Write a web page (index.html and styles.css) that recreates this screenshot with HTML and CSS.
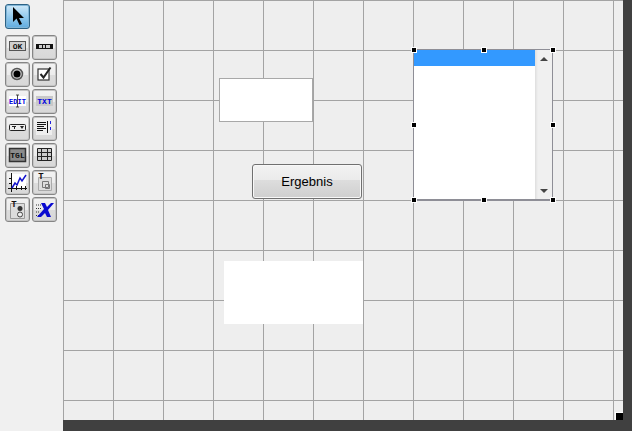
FILE: index.html
```html
<!DOCTYPE html>
<html lang="de">
<head>
  <meta charset="UTF-8" />
  <title>Layout Editor</title>
  <link rel="stylesheet" href="styles.css">
</head>
<body>

  <div class="palette">
    <button class="tool tool-active">
      <svg width="23" height="23" viewBox="0 0 23 23"><path d="M7 2v15l3.500-3.500 3 6.500 2.500-1-3-6h5z" fill="#000"/></svg>
    </button>

    <div class="tool-grid">
      <!-- Druckknopf -->
      <button class="tool">
        <svg width="23" height="23" viewBox="0 0 23 23"><rect x="3.500" y="5.500" width="16" height="9" fill="#d0d0d0" stroke="#555"/><text x="11.500" y="13" class="lbl">OK</text></svg>
      </button>
      <!-- Schieber -->
      <button class="tool">
        <svg width="23" height="23" viewBox="0 0 23 23"><rect x="3" y="8" width="17" height="5" fill="#ccc"/><path d="M3 8.500h17M3 12.500h17" stroke="#111"/><path d="M3 8h3v5H3zM9 8h1v5H9zM12 8h1v5h-1zM17 8h3v5h-3z" fill="#111"/></svg>
      </button>
      <!-- Radio -->
      <button class="tool">
        <svg width="23" height="23" viewBox="0 0 23 23"><circle cx="11" cy="11" r="5.500" fill="#ccc" stroke="#555" stroke-width="1.500"/><circle cx="11" cy="11" r="3.500" fill="#000"/></svg>
      </button>
      <!-- Checkbox -->
      <button class="tool">
        <svg width="23" height="23" viewBox="0 0 23 23"><rect x="5" y="6" width="11" height="11" fill="#fff" stroke="#333" stroke-width="1.200"/><path d="M7.500 11l3 3.500 7-10" fill="none" stroke="#222" stroke-width="2"/></svg>
      </button>
      <!-- Edit -->
      <button class="tool">
        <svg width="23" height="23" viewBox="0 0 23 23"><rect x="3" y="6" width="17" height="10" fill="#fff"/><text x="11.500" y="13.500" class="lbl lbl-blue lbl-small">EDIT</text><path d="M10 5h3M11.500 5v12M10 17h3" stroke="#222" fill="none" stroke-width=".8"/></svg>
      </button>
      <!-- Text -->
      <button class="tool">
        <svg width="23" height="23" viewBox="0 0 23 23"><rect x="3" y="6" width="17" height="10" fill="#c8c8c8"/><text x="11.500" y="13.500" class="lbl lbl-blue">TXT</text></svg>
      </button>
      <!-- Popup -->
      <button class="tool">
        <svg width="23" height="23" viewBox="0 0 23 23"><rect x="3.500" y="7.500" width="16" height="6" rx="1" fill="#eee" stroke="#222"/><path d="M6 9h4v1H9v2H8v-2H6zM14 9h4l-2 3z" fill="#222"/></svg>
      </button>
      <!-- Liste -->
      <button class="tool">
        <svg width="23" height="23" viewBox="0 0 23 23"><rect x="3" y="3" width="16" height="15" fill="#eee"/><path d="M4 5.500h9M4 7.500h9M4 9.500h7M4 11.500h9M4 13.500h6M14.500 4v12" stroke="#111"/><path d="M17.500 4v12" stroke="#22d" stroke-dasharray="3 3"/></svg>
      </button>
      <!-- Toggle -->
      <button class="tool">
        <svg width="23" height="23" viewBox="0 0 23 23"><rect x="3.500" y="4.500" width="16" height="13" fill="#8c8c8c" stroke="#333" stroke-width="1.500"/><text x="11.500" y="14" class="lbl">TGL</text></svg>
      </button>
      <!-- Tabelle -->
      <button class="tool">
        <svg width="23" height="23" viewBox="0 0 23 23"><path d="M4.500 4.500h14v12h-14zM4.500 8.500h14M4.500 12.500h14M8.500 4.500v12M14.500 4.500v12" fill="#ccc" stroke="#222"/></svg>
      </button>
      <!-- Achsen -->
      <button class="tool">
        <svg width="23" height="23" viewBox="0 0 23 23"><rect x="5" y="3" width="15" height="14" fill="#fff"/><path d="M5.500 2v19M2 17.500h19M3 7.500h3M3 12.500h3M10.500 15v4M15.500 15v4M19.500 15v4" stroke="#111" fill="none"/><path d="M6 17l3-5 2 2 3-7 2 3 4-6" stroke="#11c" stroke-width="1.500" fill="none"/></svg>
      </button>
      <!-- Panel -->
      <button class="tool">
        <svg width="23" height="23" viewBox="0 0 23 23"><path d="M5.500 6.500h13v13h-13z" fill="#ddd" stroke="#aaa"/><path d="M9.500 10.500h6v6h-6zM12.500 13.500h4v4h-4z" fill="none" stroke="#777"/><text x="8" y="8" class="lbl lbl-big">T</text></svg>
      </button>
      <!-- Gruppe -->
      <button class="tool">
        <svg width="23" height="23" viewBox="0 0 23 23"><path d="M4.500 5.500h14v15h-14z" fill="#ddd" stroke="#999"/><circle cx="14" cy="10.500" r="2.500" fill="#333"/><circle cx="14" cy="16.500" r="2.500" fill="#eee" stroke="#444"/><text x="8" y="9" class="lbl lbl-big">T</text></svg>
      </button>
      <!-- ActiveX -->
      <button class="tool">
        <svg width="23" height="23" viewBox="0 0 23 23"><path d="M3 7h5M3 10.500h5M3 14h4M3 17.500h5" stroke="#333" stroke-dasharray="1 1" fill="none"/><path d="M8 5h4l2 4 4-4h3l-6 7 3 7h-4l-2-4-4 4H4l7-8z" fill="#0a0ad0"/></svg>
      </button>
    </div>
  </div>

  <div class="workspace">
    <div class="canvas-row">
      <div class="canvas">
        <div class="widget edit-box"></div>
        <div class="widget push-btn">Ergebnis</div>
        <div class="widget static-box"></div>

        <div class="widget list-box">
          <div class="list-items"><div class="list-selected"></div></div>
          <div class="list-scroll">
            <span class="arrow-up"></span>
            <span class="arrow-down"></span>
          </div>
          <span class="handle h-tl"></span>
          <span class="handle h-tc"></span>
          <span class="handle h-tr"></span>
          <span class="handle h-ml"></span>
          <span class="handle h-mr"></span>
          <span class="handle h-bl"></span>
          <span class="handle h-bc"></span>
          <span class="handle h-br"></span>
        </div>

        <span class="resize-grip"></span>
      </div>
      <div class="edge-right"></div>
    </div>
    <div class="edge-bottom"></div>
  </div>

</body>
</html>
```

FILE: styles.css
```css
html, body {
  height: 100%;
}

body {
  margin: 0;
  display: flex;
  height: 431px;
  overflow: hidden;
  background: #f0f0f0;
  font-family: "Liberation Sans", Arial, sans-serif;
}

/* Werkzeugleiste */
.palette {
  width: 63px;
  flex: none;
  box-sizing: border-box;
  padding: 4px 0 0 5px;
  background: #f0f0f0;
}

.tool-grid {
  display: grid;
  grid-template-columns: 25px 25px;
  grid-auto-rows: 25px;
  gap: 2px;
  margin-top: 6px;
}

.tool {
  display: flex;
  align-items: center;
  justify-content: center;
  width: 25px;
  height: 25px;
  padding: 0;
  border: 1px solid #858585;
  border-radius: 3px;
  background: linear-gradient(to bottom, #f2f2f2 0, #ececec 50%, #dcdcdc 51%, #d8d8d8 100%);
  box-shadow: inset 0 0 0 1px #c4c4c4;
}

.tool-active {
  border-color: #2c6285;
  background: linear-gradient(to bottom, #cfe8f8 0, #8fc8ec 55%, #5fabdf 100%);
  box-shadow: inset 0 0 0 1px #7fb4d6;
}

.lbl {
  font-family: "Liberation Mono", monospace;
  font-size: 8px;
  font-weight: bold;
  text-anchor: middle;
  fill: #111;
}

.lbl-blue {
  fill: #0000e0;
}

.lbl-small {
  font-size: 7px;
}

.lbl-big {
  font-size: 9px;
}

/* Arbeitsflaeche */
.workspace {
  flex: 1;
  display: flex;
  flex-direction: column;
}

.canvas-row {
  display: flex;
  height: 420px;
}

.canvas {
  position: relative;
  width: 560px;
  height: 420px;
  background-color: #eeeeee;
  background-image:
    linear-gradient(to right, #a3a3a3 1px, transparent 1px),
    linear-gradient(to bottom, #a3a3a3 1px, transparent 1px);
  background-size: 50px 50px;
}

.edge-right {
  flex: 1;
  background: #404040;
}

.edge-bottom {
  flex: 1;
  background: #404040;
}

.widget {
  position: absolute;
  box-sizing: border-box;
}

.edit-box {
  left: 156px;
  top: 78px;
  width: 94px;
  height: 44px;
  background: #fff;
  border: 1px solid #a8a8a8;
}

.push-btn {
  left: 189px;
  top: 164px;
  width: 110px;
  height: 35px;
  border: 1px solid #707070;
  border-radius: 3px;
  background: linear-gradient(to bottom, #f2f2f2 0, #ebebeb 45%, #dddddd 46%, #cfcfcf 100%);
  box-shadow: inset 0 0 0 1px #f8f8f8;
  font-size: 13px;
  line-height: 33px;
  text-align: center;
  color: #000;
}

.static-box {
  left: 161px;
  top: 261px;
  width: 139px;
  height: 63px;
  background: #fff;
}

/* Listenfeld */
.list-box {
  left: 350px;
  top: 49px;
  width: 140px;
  height: 152px;
  display: flex;
  border: 1px solid #8e8e96;
  border-width: 1px 1px 2px 1px;
}

.list-items {
  flex: 1;
  background: #fff;
}

.list-selected {
  height: 16px;
  background: #3399ff;
}

.list-scroll {
  width: 17px;
  display: flex;
  flex-direction: column;
  justify-content: space-between;
  align-items: center;
  padding: 7px 0 6px;
  box-sizing: border-box;
  background: linear-gradient(to right, #dedede 0, #f0f0f0 3px);
}

.arrow-up, .arrow-down {
  width: 0;
  height: 0;
  border-left: 4px solid transparent;
  border-right: 4px solid transparent;
}

.arrow-up {
  border-bottom: 4px solid #444;
}

.arrow-down {
  border-top: 4px solid #444;
}

/* Griffe */
.handle {
  position: absolute;
  width: 4px;
  height: 4px;
  background: #000;
  border: 1px solid #fff;
}

.h-tl { left: -3px; top: -3px; }
.h-tc { left: 67px; top: -3px; }
.h-tr { right: -4px; top: -3px; }
.h-ml { left: -3px; top: 72px; }
.h-mr { right: -4px; top: 72px; }
.h-bl { left: -3px; bottom: -4px; }
.h-bc { left: 67px; bottom: -4px; }
.h-br { right: -4px; bottom: -4px; }

.resize-grip {
  position: absolute;
  right: 0;
  bottom: 0;
  width: 8px;
  height: 8px;
  background: #000;
  border-left: 1px solid #fff;
  border-top: 1px solid #fff;
  box-sizing: border-box;
}
```
